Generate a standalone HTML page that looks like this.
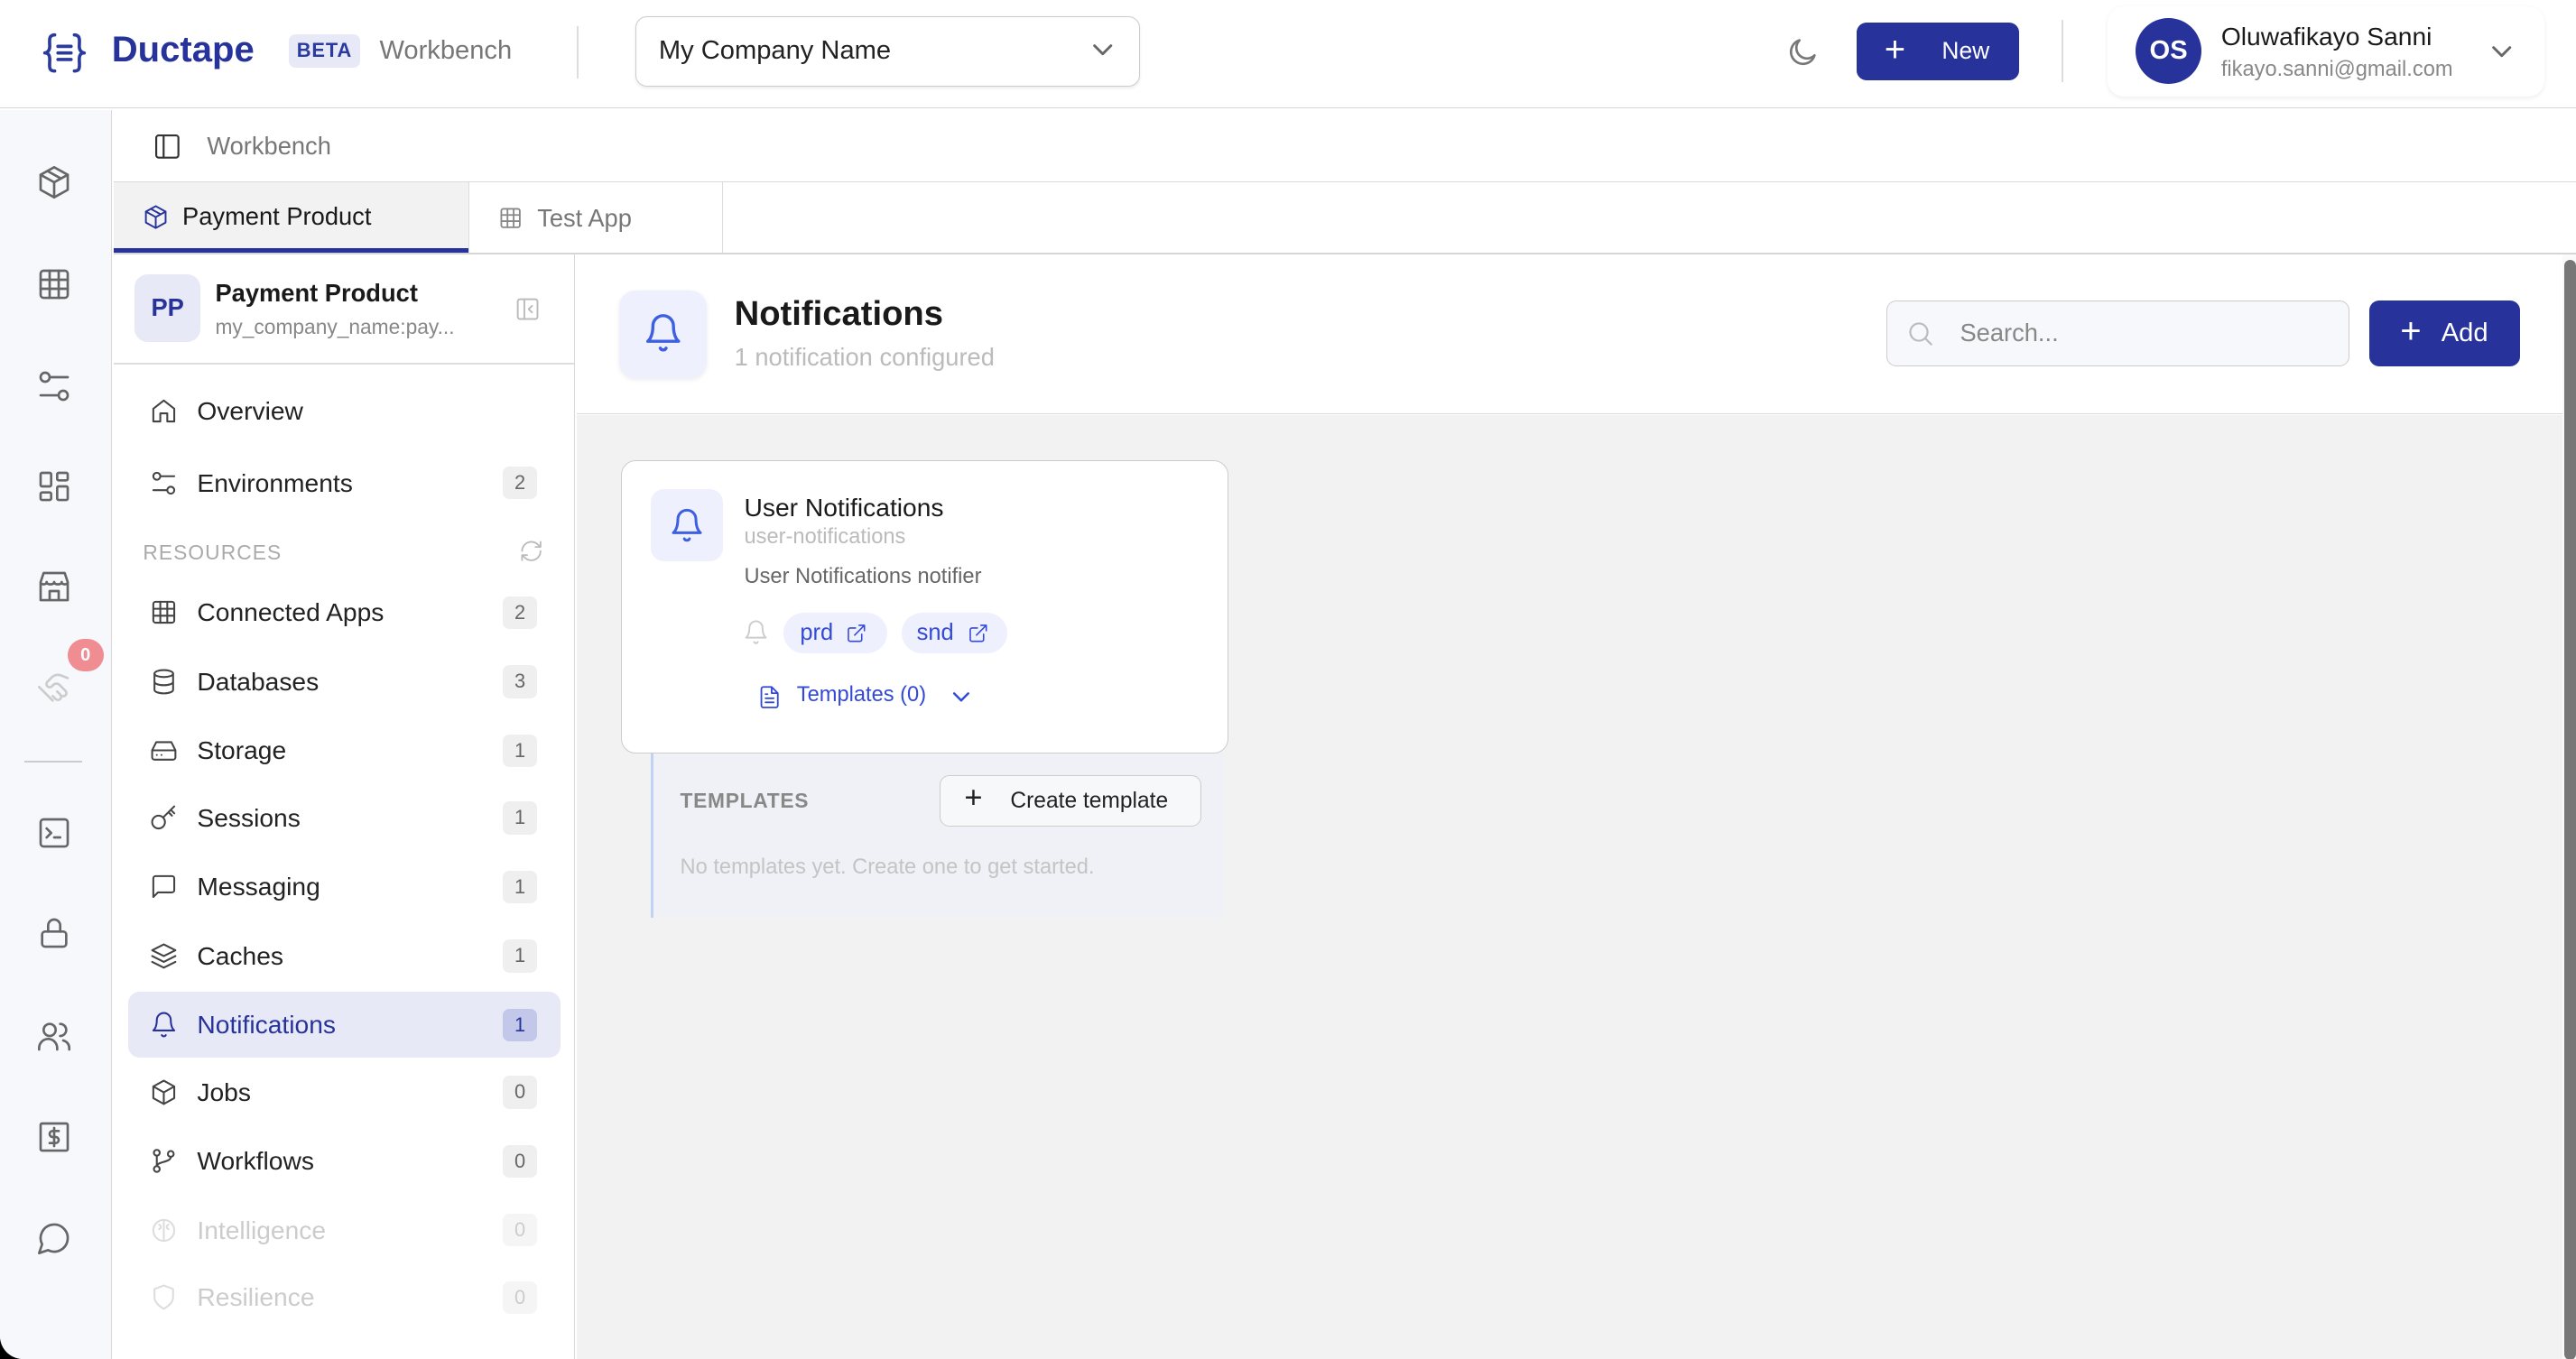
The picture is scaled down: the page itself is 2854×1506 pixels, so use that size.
<!DOCTYPE html>
<html><head><meta charset="utf-8">
<style>
*{box-sizing:border-box;margin:0;padding:0}
html,body{width:2854px;height:1506px;overflow:hidden;background:#000}
#root{zoom:1.82015;width:1568px;height:827.4px;position:relative;background:#fff;font-family:"Liberation Sans",sans-serif;color:#1a1a1a;border-radius:0 0 0 14px;overflow:hidden}
.abs{position:absolute}
svg{display:block}
.ic{fill:none;stroke:currentColor;stroke-width:1.6;stroke-linecap:round;stroke-linejoin:round}
.nav{position:absolute;left:78px;width:263px;height:40px;display:flex;align-items:center;font-size:15.5px;color:#222}
.nav svg{margin-left:13px;margin-right:12px;color:#444}
.badge{position:absolute;right:14px;width:21px;height:20px;border-radius:4px;background:#efefef;color:#666;font-size:12px;text-align:center;line-height:20px}
.rail svg{position:absolute;left:22px;color:#666}
</style></head><body><div id="root">
<!-- header -->
<div class="abs" style="left:0;top:0;width:1568px;height:66px;border-bottom:1px solid #d6d6d6"></div>
<svg class="abs" style="left:25px;top:19px" width="28" height="26" viewBox="0 0 28 26"><g class="ic" style="color:#2b3a9e;stroke:#2b3a9e;stroke-width:2"><path d="M8 2C4 2 5 6 5 9S3 13 2 13C3 13 5 13 5 17S4 24 8 24"/><path d="M20 2C24 2 23 6 23 9S25 13 26 13C25 13 23 13 23 17S24 24 20 24"/><path d="M10 9h8M10 13h8M10 17h8"/></g></svg>
<div class="abs" style="left:68px;top:18px;font-size:22px;font-weight:bold;color:#27339b">Ductape</div>
<div class="abs" style="left:176px;top:21px;width:43px;height:20px;background:#e7e9f7;border-radius:4px;color:#2b3a9e;font-size:12px;font-weight:bold;text-align:center;line-height:20px;letter-spacing:.5px">BETA</div>
<div class="abs" style="left:231px;top:22px;font-size:16px;color:#777">Workbench</div>
<div class="abs" style="left:351px;top:16px;width:1px;height:32px;background:#ddd"></div>
<div class="abs" style="left:387px;top:10px;width:307px;height:43px;border:1px solid #ccc;border-radius:7px;box-shadow:0 1px 2px rgba(0,0,0,.08)"></div>
<div class="abs" style="left:401px;top:22px;font-size:16px;color:#222">My Company Name</div>
<svg class="abs ic" style="left:664px;top:26px;color:#666" width="14" height="10" viewBox="0 0 14 10"><path d="M2 2l5 5 5-5"/></svg>
<svg class="abs ic" style="left:1086px;top:21px;color:#777" width="22" height="22" viewBox="0 0 24 24"><path d="M20 14A8 8 0 1 1 10 4a6 6 0 0 0 10 10z"/></svg>
<div class="abs" style="left:1130px;top:14px;width:99px;height:35px;background:#27339b;border-radius:6px;color:#fff;font-size:14.5px;line-height:35px"><span style="position:absolute;left:17px;top:-1px;font-size:22px;font-weight:300">+</span><span style="position:absolute;left:52px">New</span></div>
<div class="abs" style="left:1255px;top:12px;width:1px;height:38px;background:#ddd"></div>
<div class="abs" style="left:1283px;top:4px;width:266px;height:55px;border-radius:10px;box-shadow:0 1px 3px rgba(0,0,0,.07)"></div>
<div class="abs" style="left:1300px;top:11px;width:40px;height:40px;border-radius:50%;background:#27339b;color:#fff;font-weight:bold;font-size:16px;text-align:center;line-height:40px">OS</div>
<div class="abs" style="left:1352px;top:13px;font-size:15.5px;color:#1a1a1a">Oluwafikayo Sanni</div>
<div class="abs" style="left:1352px;top:35px;font-size:13px;color:#888">fikayo.sanni@gmail.com</div>
<svg class="abs ic" style="left:1516px;top:27px;color:#666" width="14" height="10" viewBox="0 0 14 10"><path d="M2 2l5 5 5-5"/></svg>

<!-- rail -->
<div class="abs rail" style="left:0;top:67px;width:68px;height:761px;background:#f7f8fc;border-right:1px solid #d9d9d9">
<svg class="ic" style="top:33px" width="22" height="22" viewBox="0 0 24 24"><path d="M12 2l9 5v10l-9 5-9-5V7z"/><path d="M3 7l9 5 9-5M12 12v10M7.5 4.5l9 5"/></svg>
<svg class="ic" style="top:95px" width="22" height="22" viewBox="0 0 24 24"><rect x="3" y="3" width="18" height="18" rx="2"/><path d="M3 9h18M3 15h18M9 3v18M15 3v18"/></svg>
<svg class="ic" style="top:157px" width="22" height="22" viewBox="0 0 24 24"><path d="M10 6h11M3 18h11"/><circle cx="6" cy="6" r="3"/><circle cx="18" cy="18" r="3"/></svg>
<svg class="ic" style="top:218px" width="22" height="22" viewBox="0 0 24 24"><rect x="3" y="3" width="7" height="9" rx="1"/><rect x="14" y="3" width="7" height="5" rx="1"/><rect x="14" y="12" width="7" height="9" rx="1"/><rect x="3" y="16" width="7" height="5" rx="1"/></svg>
<svg class="ic" style="top:279px" width="22" height="22" viewBox="0 0 24 24"><path d="M3 9l2-6h14l2 6M3 9v12h18V9M3 9c0 2 4 2 4 0 0 2 5 2 5 0 0 2 5 2 5 0 0 2 4 2 4 0M9 21v-6h6v6"/></svg>
<svg class="ic" style="top:341px;color:#ccc" width="22" height="22" viewBox="0 0 24 24"><path d="M11 17l2 2a1 1 0 0 0 3-3M14 14l2.5 2.5a1 1 0 0 0 3-3l-3.9-3.9a3 3 0 0 0-4.2 0l-.9.9a1 1 0 1 1-3-3l2.8-2.8a6 6 0 0 1 7.2-1L21 5M2 11l9 9"/></svg>
<div style="position:absolute;left:41px;top:322px;width:22px;height:20px;border-radius:10px;background:#ef8d92;color:#fff;font-size:11px;font-weight:bold;text-align:center;line-height:20px">0</div>
<div style="position:absolute;left:15px;top:396px;width:35px;height:1px;background:#ccc"></div>
<svg class="ic" style="top:429px" width="22" height="22" viewBox="0 0 24 24"><rect x="3" y="3" width="18" height="18" rx="2"/><path d="M7 9l3 3-3 3M12 15h4"/></svg>
<svg class="ic" style="top:490px" width="22" height="22" viewBox="0 0 24 24"><rect x="4" y="11" width="16" height="10" rx="2"/><path d="M8 11V7a4 4 0 0 1 8 0v4"/></svg>
<svg class="ic" style="top:553px" width="22" height="22" viewBox="0 0 24 24"><circle cx="9" cy="8" r="4"/><path d="M2 21v-1a6 6 0 0 1 12 0v1M16 4a4 4 0 0 1 0 8M22 21v-1a5 5 0 0 0-4-5"/></svg>
<svg class="ic" style="top:614px" width="22" height="22" viewBox="0 0 24 24"><rect x="3" y="3" width="18" height="18" rx="1"/><path d="M15 8h-4a2 2 0 0 0 0 4h2a2 2 0 0 1 0 4H9M12 6v12"/></svg>
<svg class="ic" style="top:676px" width="22" height="22" viewBox="0 0 24 24"><path d="M7.9 20A9 9 0 1 0 4 16.1L2 22z"/></svg>
</div>

<!-- breadcrumb -->
<div class="abs" style="left:69px;top:67px;width:1499px;height:44px;border-bottom:1px solid #d9d9d9"></div>
<svg class="abs ic" style="left:93px;top:80px;color:#333" width="18" height="18" viewBox="0 0 24 24"><rect x="3" y="3" width="18" height="18" rx="2"/><path d="M9 3v18"/></svg>
<div class="abs" style="left:126px;top:80px;font-size:15px;color:#777">Workbench</div>
<!-- tabs -->
<div class="abs" style="left:69px;top:111px;width:216px;height:43px;background:#f2f2f2;border-bottom:3px solid #27339b"></div>
<svg class="abs ic" style="left:87px;top:124px;color:#27339b" width="16" height="16" viewBox="0 0 24 24"><path d="M12 2l9 5v10l-9 5-9-5V7z"/><path d="M3 7l9 5 9-5M12 12v10M7.5 4.5l9 5"/></svg>
<div class="abs" style="left:111px;top:123px;font-size:15px;color:#1a1a1a">Payment Product</div>
<div class="abs" style="left:285px;top:111px;width:155px;height:43px;border-left:1px solid #ddd;border-right:1px solid #ddd"></div>
<svg class="abs ic" style="left:303px;top:125px;color:#888" width="15" height="15" viewBox="0 0 24 24"><rect x="3" y="3" width="18" height="18" rx="2"/><path d="M3 9h18M3 15h18M9 3v18M15 3v18"/></svg>
<div class="abs" style="left:327px;top:124px;font-size:15px;color:#777">Test App</div>
<div class="abs" style="left:69px;top:154px;width:1499px;height:1px;background:#d6d6d6"></div>

<!-- sidebar -->
<div class="abs" style="left:69px;top:155px;width:281px;height:673px;border-right:1px solid #d9d9d9;background:#fff"></div>
<div class="abs" style="left:69px;top:221px;width:281px;height:1px;background:#ddd"></div>
<div class="abs" style="left:82px;top:167px;width:40px;height:41px;border-radius:8px;background:#e7e9f7;color:#27339b;font-weight:bold;font-size:15px;text-align:center;line-height:41px">PP</div>
<div class="abs" style="left:131px;top:170px;font-size:15px;font-weight:bold;color:#1a1a1a">Payment Product</div>
<div class="abs" style="left:131px;top:192px;font-size:12.5px;color:#888">my_company_name:pay...</div>
<svg class="abs ic" style="left:313px;top:180px;color:#bbb" width="16" height="16" viewBox="0 0 24 24"><rect x="3" y="3" width="18" height="18" rx="2"/><path d="M9 3v18M16 9l-3 3 3 3"/></svg>

<div class="nav" style="top:230px"><svg class="ic" width="17" height="17" viewBox="0 0 24 24"><path d="M3 10l9-7 9 7v11h-6v-7H9v7H3z"/></svg>Overview</div>
<div class="nav" style="top:274px"><svg class="ic" width="17" height="17" viewBox="0 0 24 24"><path d="M10 6h11M3 18h11"/><circle cx="6" cy="6" r="3"/><circle cx="18" cy="18" r="3"/></svg>Environments<span class="badge">2</span></div>
<div class="abs" style="left:87px;top:329px;font-size:12.5px;color:#aaa;letter-spacing:.6px">RESOURCES</div>
<svg class="abs ic" style="left:316px;top:328px;color:#bbb" width="15" height="15" viewBox="0 0 24 24"><path d="M21 12a9 9 0 0 1-15 6.7L3 16M3 12a9 9 0 0 1 15-6.7L21 8M21 3v5h-5M3 21v-5h5"/></svg>
<div class="nav" style="top:353px"><svg class="ic" width="17" height="17" viewBox="0 0 24 24"><rect x="3" y="3" width="18" height="18" rx="2"/><path d="M3 9h18M3 15h18M9 3v18M15 3v18"/></svg>Connected Apps<span class="badge">2</span></div>
<div class="nav" style="top:395px"><svg class="ic" width="17" height="17" viewBox="0 0 24 24"><ellipse cx="12" cy="5" rx="8" ry="3"/><path d="M4 5v14c0 1.7 3.6 3 8 3s8-1.3 8-3V5M4 12c0 1.7 3.6 3 8 3s8-1.3 8-3"/></svg>Databases<span class="badge">3</span></div>
<div class="nav" style="top:437px"><svg class="ic" width="17" height="17" viewBox="0 0 24 24"><path d="M22 12H2M5.5 5h13L22 12v6a2 2 0 0 1-2 2H4a2 2 0 0 1-2-2v-6zM6 16h.01M10 16h.01"/></svg>Storage<span class="badge">1</span></div>
<div class="nav" style="top:478px"><svg class="ic" width="17" height="17" viewBox="0 0 24 24"><circle cx="7.5" cy="15.5" r="5.5"/><path d="M11.5 11.5L21 2M16 7l3 3M18 5l3 3"/></svg>Sessions<span class="badge">1</span></div>
<div class="nav" style="top:520px"><svg class="ic" width="17" height="17" viewBox="0 0 24 24"><path d="M21 15a2 2 0 0 1-2 2H7l-4 4V5a2 2 0 0 1 2-2h14a2 2 0 0 1 2 2z"/></svg>Messaging<span class="badge">1</span></div>
<div class="nav" style="top:562px"><svg class="ic" width="17" height="17" viewBox="0 0 24 24"><path d="M12 2l10 5-10 5L2 7zM2 12l10 5 10-5M2 17l10 5 10-5"/></svg>Caches<span class="badge">1</span></div>
<div class="nav" style="top:604px;background:#e7e9f7;border-radius:7px;color:#27339b"><svg class="ic" style="color:#27339b" width="17" height="17" viewBox="0 0 24 24"><path d="M6 8a6 6 0 0 1 12 0c0 7 3 9 3 9H3s3-2 3-9M10.3 21a1.9 1.9 0 0 0 3.4 0"/></svg>Notifications<span class="badge" style="background:#c3c8ea;color:#27339b">1</span></div>
<div class="nav" style="top:645px"><svg class="ic" width="17" height="17" viewBox="0 0 24 24"><path d="M12 2l9 5v10l-9 5-9-5V7z"/><path d="M3 7l9 5 9-5M12 12v10"/></svg>Jobs<span class="badge">0</span></div>
<div class="nav" style="top:687px"><svg class="ic" width="17" height="17" viewBox="0 0 24 24"><circle cx="6" cy="19" r="2.5"/><circle cx="6" cy="5" r="2.5"/><circle cx="18" cy="6" r="2.5"/><path d="M6 7.5v9M18 8.5c0 5-12 4-12 8"/></svg>Workflows<span class="badge">0</span></div>
<div class="nav" style="top:729px;color:#ccc"><svg class="ic" style="color:#ddd" width="17" height="17" viewBox="0 0 24 24"><circle cx="12" cy="12" r="9"/><path d="M12 3v18M8 7c2 1 2 3 0 4M16 7c-2 1-2 3 0 4"/></svg>Intelligence<span class="badge" style="color:#ccc;background:#f5f5f5">0</span></div>
<div class="nav" style="top:770px;color:#ccc"><svg class="ic" style="color:#ddd" width="17" height="17" viewBox="0 0 24 24"><path d="M12 22s8-4 8-10V5l-8-3-8 3v7c0 6 8 10 8 10z"/></svg>Resilience<span class="badge" style="color:#ccc;background:#f5f5f5">0</span></div>

<!-- main -->
<div class="abs" style="left:351px;top:155px;width:1209px;height:97px;background:#fff;border-bottom:1px solid #d9d9d9"></div>
<div class="abs" style="left:351px;top:253px;width:1209px;height:575px;background:#f2f2f2"></div>
<div class="abs" style="left:1560px;top:155px;width:8px;height:673px;background:#fafafa"></div>
<div class="abs" style="left:1561px;top:158px;width:7px;height:670px;background:#777;border-radius:4px"></div>
<div class="abs" style="left:377px;top:177px;width:53px;height:53px;border-radius:10px;background:#eef1fd;box-shadow:0 1px 3px rgba(0,0,0,.08)"></div>
<svg class="abs ic" style="left:391px;top:190px;color:#3e5fe0;stroke-width:1.8" width="25" height="25" viewBox="0 0 24 24"><path d="M6 8a6 6 0 0 1 12 0c0 7 3 9 3 9H3s3-2 3-9M10.3 21a1.9 1.9 0 0 0 3.4 0"/></svg>
<div class="abs" style="left:447px;top:179px;font-size:21px;font-weight:bold;color:#1a1a1a">Notifications</div>
<div class="abs" style="left:447px;top:209px;font-size:15px;color:#bbb">1 notification configured</div>
<div class="abs" style="left:1148px;top:183px;width:282px;height:40px;border:1px solid #ccc;border-radius:6px;background:#f7f8fc"></div>
<svg class="abs ic" style="left:1160px;top:194px;color:#bbb" width="18" height="18" viewBox="0 0 24 24"><circle cx="11" cy="11" r="7"/><path d="M21 21l-5-5"/></svg>
<div class="abs" style="left:1193px;top:194px;font-size:15px;color:#888">Search...</div>
<div class="abs" style="left:1442px;top:183px;width:92px;height:40px;background:#27339b;border-radius:6px;color:#fff;font-size:16px;line-height:40px"><span style="position:absolute;left:19px;top:-1px;font-size:22px;font-weight:300">+</span><span style="position:absolute;left:44px">Add</span></div>

<!-- card -->
<div class="abs" style="left:396px;top:458px;width:349px;height:101px;background:#eff1f6;border-left:2px solid #c2d2f5"></div>
<div class="abs" style="left:378px;top:280px;width:370px;height:179px;background:#fff;border:1px solid #ccc;border-radius:9px"></div>
<div class="abs" style="left:396px;top:298px;width:44px;height:44px;border-radius:8px;background:#eef1fd"></div>
<svg class="abs ic" style="left:407px;top:309px;color:#3e5fe0;stroke-width:1.8" width="22" height="22" viewBox="0 0 24 24"><path d="M6 8a6 6 0 0 1 12 0c0 7 3 9 3 9H3s3-2 3-9M10.3 21a1.9 1.9 0 0 0 3.4 0"/></svg>
<div class="abs" style="left:453px;top:300px;font-size:15.5px;color:#1a1a1a">User Notifications</div>
<div class="abs" style="left:453px;top:320px;font-size:13px;color:#bbb">user-notifications</div>
<div class="abs" style="left:453px;top:344px;font-size:13px;color:#666">User Notifications notifier</div>
<svg class="abs ic" style="left:452px;top:377px;color:#ccc" width="16" height="16" viewBox="0 0 24 24"><path d="M6 8a6 6 0 0 1 12 0c0 7 3 9 3 9H3s3-2 3-9M10.3 21a1.9 1.9 0 0 0 3.4 0"/></svg>
<div class="abs" style="left:477px;top:373px;width:63px;height:25px;border-radius:13px;background:#eef1fd;color:#3349d8;font-size:14px;line-height:25px;padding-left:10px">prd</div>
<svg class="abs ic" style="left:515px;top:379px;color:#3349d8" width="13" height="13" viewBox="0 0 24 24"><path d="M15 3h6v6M10 14L21 3M18 13v6a2 2 0 0 1-2 2H5a2 2 0 0 1-2-2V8a2 2 0 0 1 2-2h6"/></svg>
<div class="abs" style="left:549px;top:373px;width:64px;height:25px;border-radius:13px;background:#eef1fd;color:#3349d8;font-size:14px;line-height:25px;padding-left:9px">snd</div>
<svg class="abs ic" style="left:589px;top:379px;color:#3349d8" width="13" height="13" viewBox="0 0 24 24"><path d="M15 3h6v6M10 14L21 3M18 13v6a2 2 0 0 1-2 2H5a2 2 0 0 1-2-2V8a2 2 0 0 1 2-2h6"/></svg>
<svg class="abs ic" style="left:461px;top:417px;color:#3349d8" width="15" height="15" viewBox="0 0 24 24"><path d="M14 2H6a2 2 0 0 0-2 2v16a2 2 0 0 0 2 2h12a2 2 0 0 0 2-2V8zM14 2v6h6M8 13h8M8 17h8M8 9h2"/></svg>
<div class="abs" style="left:485px;top:416px;font-size:13px;color:#3349d8">Templates (0)</div>
<svg class="abs ic" style="left:579px;top:420px;color:#3349d8" width="12" height="10" viewBox="0 0 14 10"><path d="M2 2l5 5 5-5"/></svg>
<div class="abs" style="left:414px;top:480px;font-size:12.5px;font-weight:bold;color:#888;letter-spacing:.4px">TEMPLATES</div>
<div class="abs" style="left:572px;top:472px;width:159px;height:31px;border:1px solid #ccc;border-radius:6px;background:#f7f8fa"></div>
<div class="abs" style="left:587px;top:475px;font-size:19px;color:#222;font-weight:300">+</div>
<div class="abs" style="left:615px;top:480px;font-size:13.5px;color:#222">Create template</div>
<div class="abs" style="left:414px;top:521px;font-size:13px;color:#c4c4c4">No templates yet. Create one to get started.</div>
</div></body></html>
